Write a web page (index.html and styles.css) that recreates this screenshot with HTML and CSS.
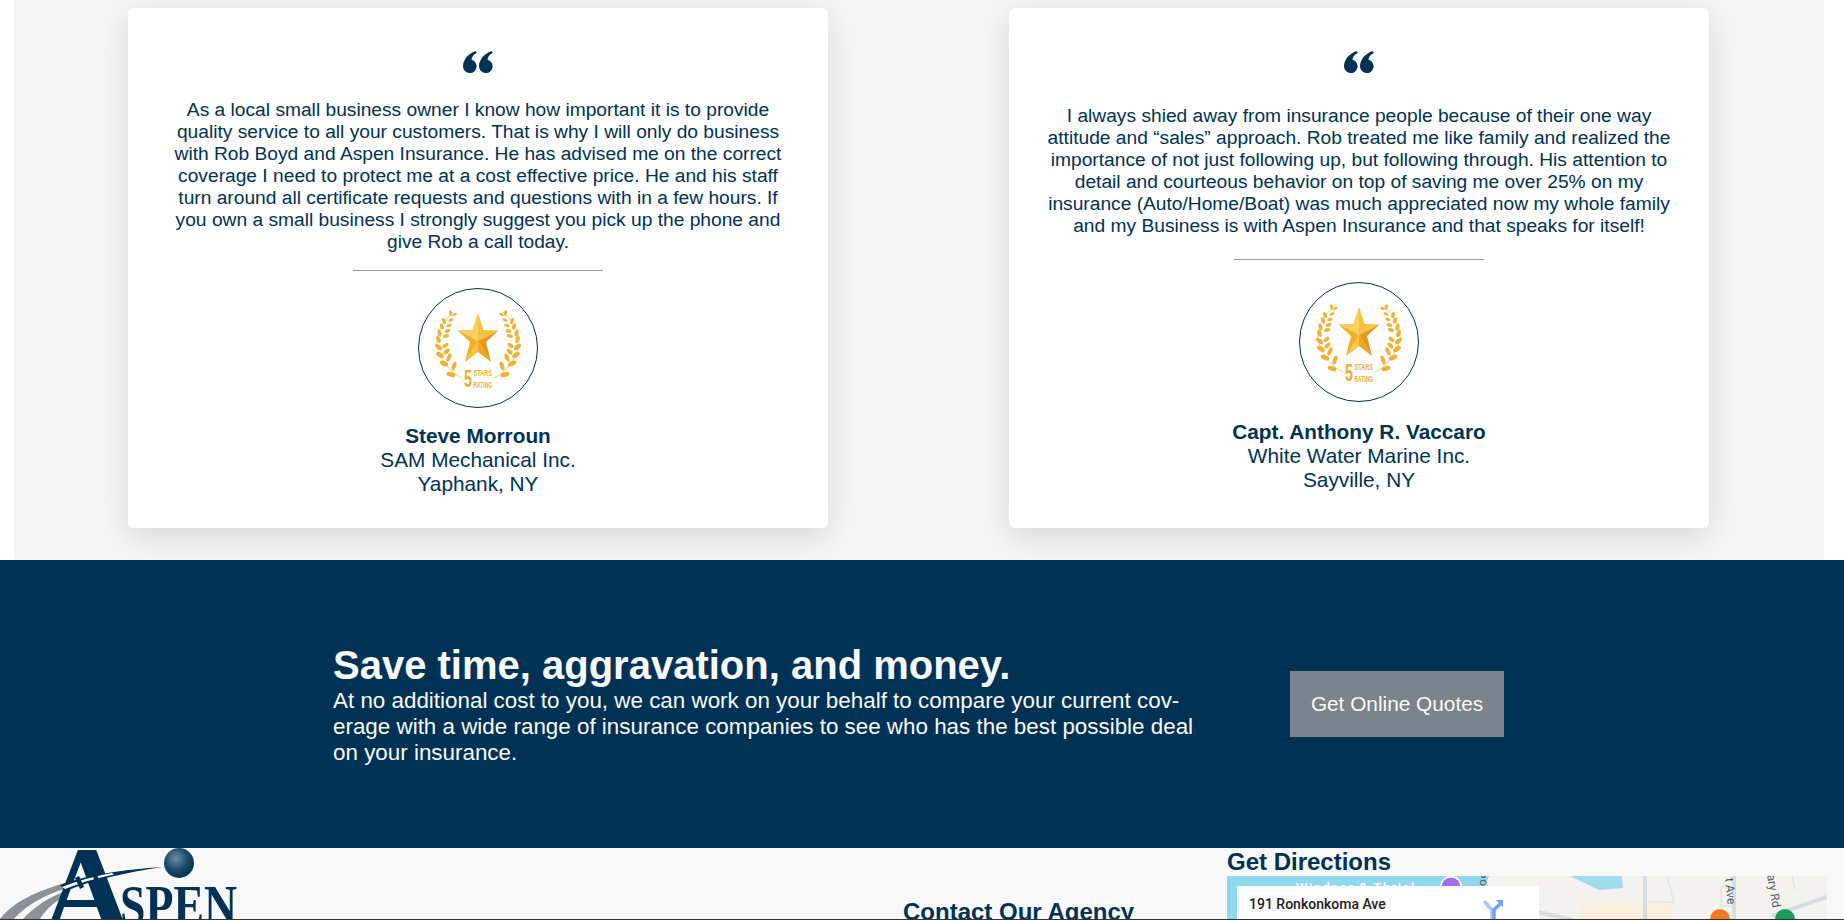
FILE: index.html
```html
<!DOCTYPE html>
<html>
<head>
   <link rel="stylesheet" href="styles.css">
</head>
<body>
   <svg class="defs" width="0" height="0">
      <symbol id="branch" viewBox="0 0 120 120">
         <path d="M44 90 C34 86 22 72 19 57 C18 45 25 33 35 24" fill="none" stroke="#f5c45c" stroke-width="0.8"/>
         <g fill="#f3b235">
            <ellipse cx="33" cy="86.5" rx="4.6" ry="2.4" transform="rotate(15 33 86.5)"/>
            <ellipse cx="26" cy="75.5" rx="4.6" ry="2.4" transform="rotate(25 26 75.5)"/>
            <ellipse cx="22" cy="67" rx="4.4" ry="2.3" transform="rotate(35 22 67)"/>
            <ellipse cx="20.5" cy="59" rx="4.2" ry="2.2" transform="rotate(40 20.5 59)"/>
            <ellipse cx="20.5" cy="51.5" rx="3.8" ry="2" transform="rotate(70 20.5 51.5)"/>
            <ellipse cx="21.5" cy="45" rx="3.6" ry="1.9" transform="rotate(75 21.5 45)"/>
            <ellipse cx="24" cy="38.5" rx="3.4" ry="1.8" transform="rotate(75 24 38.5)"/>
            <ellipse cx="26" cy="33" rx="3.2" ry="1.7" transform="rotate(70 26 33)"/>
            <ellipse cx="32.5" cy="25" rx="2.8" ry="1.5" transform="rotate(75 32.5 25)"/>
            <ellipse cx="36" cy="78" rx="4.6" ry="2" transform="rotate(-70 36 78)"/>
            <ellipse cx="31" cy="69.5" rx="4.4" ry="2" transform="rotate(-65 31 69.5)"/>
            <ellipse cx="28.5" cy="63.5" rx="3.6" ry="2" transform="rotate(-45 28.5 63.5)"/>
            <ellipse cx="27.5" cy="57.5" rx="3.4" ry="1.9" transform="rotate(-35 27.5 57.5)"/>
            <ellipse cx="28" cy="48" rx="3.2" ry="1.8" transform="rotate(-15 28 48)"/>
            <ellipse cx="29.5" cy="43" rx="3" ry="1.7" transform="rotate(-15 29.5 43)"/>
            <ellipse cx="31" cy="37.5" rx="2.8" ry="1.6" transform="rotate(-15 31 37.5)"/>
            <ellipse cx="33" cy="32" rx="2.6" ry="1.4" transform="rotate(-20 33 32)"/>
            <ellipse cx="36.5" cy="26.5" rx="2.4" ry="1.3" transform="rotate(-25 36.5 26.5)"/>
         </g>
      </symbol>
      <symbol id="star" viewBox="0 0 120 120">
         <polygon points="60,25 65.5,42 80.5,42.5 60,53 39.5,42.5 54.5,42" fill="#f9c13f"/>
         <polygon points="60,25 60,53 39.5,42.5 54.5,42" fill="#fbd060"/>
         <polygon points="80.5,42.5 68,54 73,74 60,53" fill="#e8971b"/>
         <polygon points="39.5,42.5 52,54 47,74 60,53" fill="#f5ad2a"/>
         <polygon points="60,53 73,74 60,64 47,74" fill="#f0a423"/>
         <polygon points="60,53 60,64 47,74" fill="#fbc548"/>
      </symbol>
      <symbol id="quote" viewBox="0 0 30 22">
         <path d="M12.5 0 C6 2.5 0 8 0 15.2 A6.8 6.8 0 1 0 8.6 8.7 C8.4 6.2 10.2 3.6 13.8 1.9 Z"/>
         <path d="M28.5 0 C22 2.5 16 8 16 15.2 A6.8 6.8 0 1 0 24.6 8.7 C24.4 6.2 26.2 3.6 29.8 1.9 Z"/>
      </symbol>
   </svg>

   <section class="reviews">
      <div class="card">
         <svg class="quote-icon"><use href="#quote"/></svg>
         <p class="review-text">As a local small business owner I know how important it is to provide quality service to all your customers. That is why I will only do business with Rob Boyd and Aspen Insurance. He has advised me on the correct coverage I need to protect me at a cost effective price. He and his staff turn around all certificate requests and questions with in a few hours. If you own a small business I strongly suggest you pick up the phone and give Rob a call today.</p>
         <hr class="divider">
         <svg class="badge" viewBox="0 0 120 120">
            <circle cx="60" cy="60" r="59.5" fill="#fff" stroke="#003256" stroke-width="1"/>
            <use href="#branch" width="120" height="120"/>
            <use href="#branch" width="120" height="120" transform="translate(120 0) scale(-1 1)"/>
            <use href="#star" width="120" height="120"/>
            <text class="badge-five" transform="translate(46 99) scale(0.6 1)">5</text>
            <text class="badge-word" transform="translate(55.5 88.3) scale(0.6 1)">STARS</text>
            <text class="badge-word" transform="translate(55.5 99.5) scale(0.53 1)">RATING</text>
         </svg>
         <div class="author">
            <strong>Steve Morroun</strong>
            <span>SAM Mechanical Inc.</span>
            <span>Yaphank, NY</span>
         </div>
      </div>
      <div class="card card-short">
         <svg class="quote-icon"><use href="#quote"/></svg>
         <p class="review-text">I always shied away from insurance people because of their one way attitude and “sales” approach. Rob treated me like family and realized the importance of not just following up, but following through. His attention to detail and courteous behavior on top of saving me over 25% on my insurance (Auto/Home/Boat) was much appreciated now my whole family and my Business is with Aspen Insurance and that speaks for itself!</p>
         <hr class="divider">
         <svg class="badge" viewBox="0 0 120 120">
            <circle cx="60" cy="60" r="59.5" fill="#fff" stroke="#003256" stroke-width="1"/>
            <use href="#branch" width="120" height="120"/>
            <use href="#branch" width="120" height="120" transform="translate(120 0) scale(-1 1)"/>
            <use href="#star" width="120" height="120"/>
            <text class="badge-five" transform="translate(46 99) scale(0.6 1)">5</text>
            <text class="badge-word" transform="translate(55.5 88.3) scale(0.6 1)">STARS</text>
            <text class="badge-word" transform="translate(55.5 99.5) scale(0.53 1)">RATING</text>
         </svg>
         <div class="author">
            <strong>Capt. Anthony R. Vaccaro</strong>
            <span>White Water Marine Inc.</span>
            <span>Sayville, NY</span>
         </div>
      </div>
   </section>

   <section class="banner">
      <div class="banner-text">
         <h2>Save time, aggravation, and money.</h2>
         <p>At no additional cost to you, we can work on your behalf to compare your current cov-erage with a wide range of insurance companies to see who has the best possible deal on your insurance.</p>
      </div>
      <a class="quote-btn" href="#">Get Online Quotes</a>
   </section>

   <footer class="footer">
      <div class="logo-col">
         <svg class="logo" viewBox="0 0 240 71">
            <defs>
               <radialGradient id="ball" cx="0.4" cy="0.35" r="0.7">
                  <stop offset="0" stop-color="#6f8ba3"/>
                  <stop offset="0.55" stop-color="#1d4a6d"/>
                  <stop offset="1" stop-color="#003256"/>
               </radialGradient>
            </defs>
            <path d="M0 71 C14 53 38 43 62 36 L64 41 C44 47 25 58 14 71 Z" fill="#8a9299"/>
            <path d="M23 71 C34 59 49 49 66 43 L68 47 C56 52 46 61 40 71 Z" fill="#8a9299"/>
            <text class="logo-a" x="40" y="87">A</text>
            <text class="logo-word" x="120" y="77" textLength="117" lengthAdjust="spacingAndGlyphs">SPEN</text>
            <path d="M60 37 C82 28 125 21 163 19 C128 24 92 32 66 43 Z" fill="#003256"/>
            <path d="M62 39 C80 32 96 28 112 25 L114 26.5 C96 30 80 35 65 41 Z" fill="#fff"/>
            <path d="M75 30 L80 41 L84 39 L79 28 Z M92 26 L96 36 L100 34 L96 25 Z" fill="#003256"/>
            <circle cx="179" cy="15" r="15" fill="url(#ball)"/>
         </svg>
      </div>
      <div class="contact-col">
         <h3>Contact Our Agency</h3>
      </div>
      <div class="directions-col">
         <h3>Get Directions</h3>
         <div class="map">
            <svg class="map-art" viewBox="0 0 600 44">
               <rect width="600" height="44" fill="#f4f2ef"/>
               <path d="M0 0 H262 L256 14 L262 44 H0 Z" fill="#8fd9ee"/>
               <path d="M343 0 H395 L396 12 L372 14 Z" fill="#9fdcee"/>
               <path d="M353 26 H445 V44 H353 Z" fill="#f8f0dc"/>
               <path d="M312 36 L345 44 M418 0 V44 M507 0 V44 M600 21 L545 40" fill="none" stroke="#d3dde3" stroke-width="4"/>
               <path d="M440 0 L447 26 H418 M494 10 L507 10 M494 10 V30 H507 M565 0 L568 14" fill="none" stroke="#dfe5e8" stroke-width="1.5"/>
               <circle cx="224" cy="11" r="11" fill="#fff"/>
               <circle cx="224" cy="11" r="9.5" fill="#a86ef0"/>
               <circle cx="493" cy="43" r="10" fill="#f27a1f"/>
               <circle cx="558" cy="43" r="10" fill="#1f9a5f"/>
            </svg>
            <span class="map-label map-water">Windsor &amp; Thrial</span>
            <span class="map-label map-road-a">Pond</span>
            <span class="map-label map-road-b">t Ave</span>
            <span class="map-label map-road-c">ary Rd</span>
            <div class="map-card">
               <span>191 Ronkonkoma Ave</span>
               <svg class="map-dir" viewBox="0 0 20 20">
                  <path d="M1 1 L9 10 V20" fill="none" stroke="#a9c8f3" stroke-width="3.5"/>
                  <path d="M18 3 L11 10 V20" fill="none" stroke="#6ea4ec" stroke-width="3.5"/>
                  <path d="M13 0 H20 V7 Z" fill="#6ea4ec"/>
               </svg>
            </div>
         </div>
      </div>
   </footer>
</body>
</html>
```

FILE: styles.css
```css
html, body {
   margin: 0;
   height: 920px;
   overflow: hidden;
}

body {
   font-family: "Liberation Sans", Arial, sans-serif;
   background-color: #fff;
   color: #003256;
}

.defs {
   display: block;
   height: 0;
}

.reviews {
   display: flex;
   gap: 181px;
   height: 560px;
   box-sizing: border-box;
   margin: 0 20px 0 14px;
   padding: 8px 0 0 114px;
   background-color: #f5f5f5;
}

.card {
   display: flex;
   flex-direction: column;
   align-items: center;
   width: 700px;
   height: 520px;
   box-sizing: border-box;
   padding-top: 43px;
   background-color: #fff;
   border-radius: 6px;
   box-shadow: 0 8px 32px rgba(0, 0, 0, 0.12);
}

.quote-icon {
   display: block;
   width: 30px;
   height: 22px;
   fill: #003256;
}

.review-text {
   width: 630px;
   margin: 26px 0 0;
   font-size: 19.2px;
   line-height: 22px;
   text-align: center;
}

.divider {
   width: 250px;
   height: 1px;
   margin: 17px 0;
   border: 0;
   background-color: #999;
}

.badge {
   display: block;
   width: 120px;
   height: 120px;
   flex: none;
}

.badge-five {
   font-family: "Liberation Sans", sans-serif;
   font-weight: bold;
   font-size: 24px;
   fill: #f2b134;
}

.badge-word {
   font-family: "Liberation Sans", sans-serif;
   font-weight: bold;
   font-size: 9.3px;
   fill: #efae2e;
}

.author {
   display: flex;
   flex-direction: column;
   align-items: center;
   margin-top: 16px;
   font-size: 20.8px;
   line-height: 24px;
}

.card-short .review-text {
   margin-top: 32px;
}

.card-short .divider {
   margin: 22px 0;
}

.card-short .author {
   margin-top: 18px;
}

.banner {
   display: flex;
   align-items: center;
   height: 288px;
   box-sizing: border-box;
   padding-left: 333px;
   background-color: #003256;
   color: #f8f9fa;
}

.banner-text {
   width: 870px;
   margin-right: 87px;
}

.banner-text h2 {
   margin: 0;
   font-size: 40px;
   line-height: 46px;
   font-weight: bold;
}

.banner-text p {
   margin: 0;
   font-size: 22.4px;
   line-height: 26px;
}

.quote-btn {
   display: flex;
   align-items: center;
   justify-content: center;
   width: 214px;
   height: 66px;
   background-color: #7b838b;
   color: #f8f9fa;
   font-size: 20.8px;
   text-decoration: none;
}

.footer {
   display: flex;
   height: 72px;
   box-sizing: border-box;
   overflow: hidden;
   background-color: #f8f8f8;
   border-bottom: 1px solid #333;
}

.logo-col {
   width: 903px;
   flex: none;
}

.logo {
   display: block;
   width: 240px;
   height: 71px;
}

.logo-a {
   font-family: "Liberation Serif", serif;
   font-weight: bold;
   font-size: 130px;
   fill: #003256;
}

.logo-word {
   font-family: "Liberation Serif", serif;
   font-weight: bold;
   font-size: 56px;
   fill: #003256;
}

.contact-col {
   width: 324px;
   flex: none;
}

.contact-col h3 {
   margin: 50px 0 0;
   font-size: 24px;
   line-height: 28px;
}

.directions-col h3 {
   margin: 0;
   font-size: 24px;
   line-height: 28px;
}

.map {
   position: relative;
   width: 600px;
   height: 300px;
   overflow: hidden;
}

.map-art {
   display: block;
   width: 600px;
   height: 44px;
}

.map-label {
   position: absolute;
   font-family: Roboto, sans-serif;
   font-size: 12px;
   line-height: 14px;
   color: #4f5b67;
   white-space: nowrap;
}

.map-water {
   top: 5px;
   left: 69px;
   color: #fff;
   font-size: 13px;
   font-weight: 500;
   letter-spacing: 1.5px;
}

.map-road-a {
   top: 2px;
   left: 244px;
   transform: rotate(70deg);
}

.map-road-b {
   top: 8px;
   left: 490px;
   transform: rotate(85deg);
}

.map-road-c {
   top: 8px;
   left: 530px;
   transform: rotate(80deg);
}

.map-card {
   position: absolute;
   top: 10px;
   left: 10px;
   display: flex;
   align-items: flex-start;
   justify-content: space-between;
   width: 302px;
   height: 80px;
   box-sizing: border-box;
   padding: 10px 36px 0 12px;
   background-color: #fff;
   border-radius: 2px;
   font-family: Roboto, sans-serif;
   font-size: 14px;
   font-weight: 500;
   line-height: 16px;
   color: #202124;
}

.map-dir {
   display: block;
   width: 20px;
   height: 20px;
   margin-top: 4px;
}
```
